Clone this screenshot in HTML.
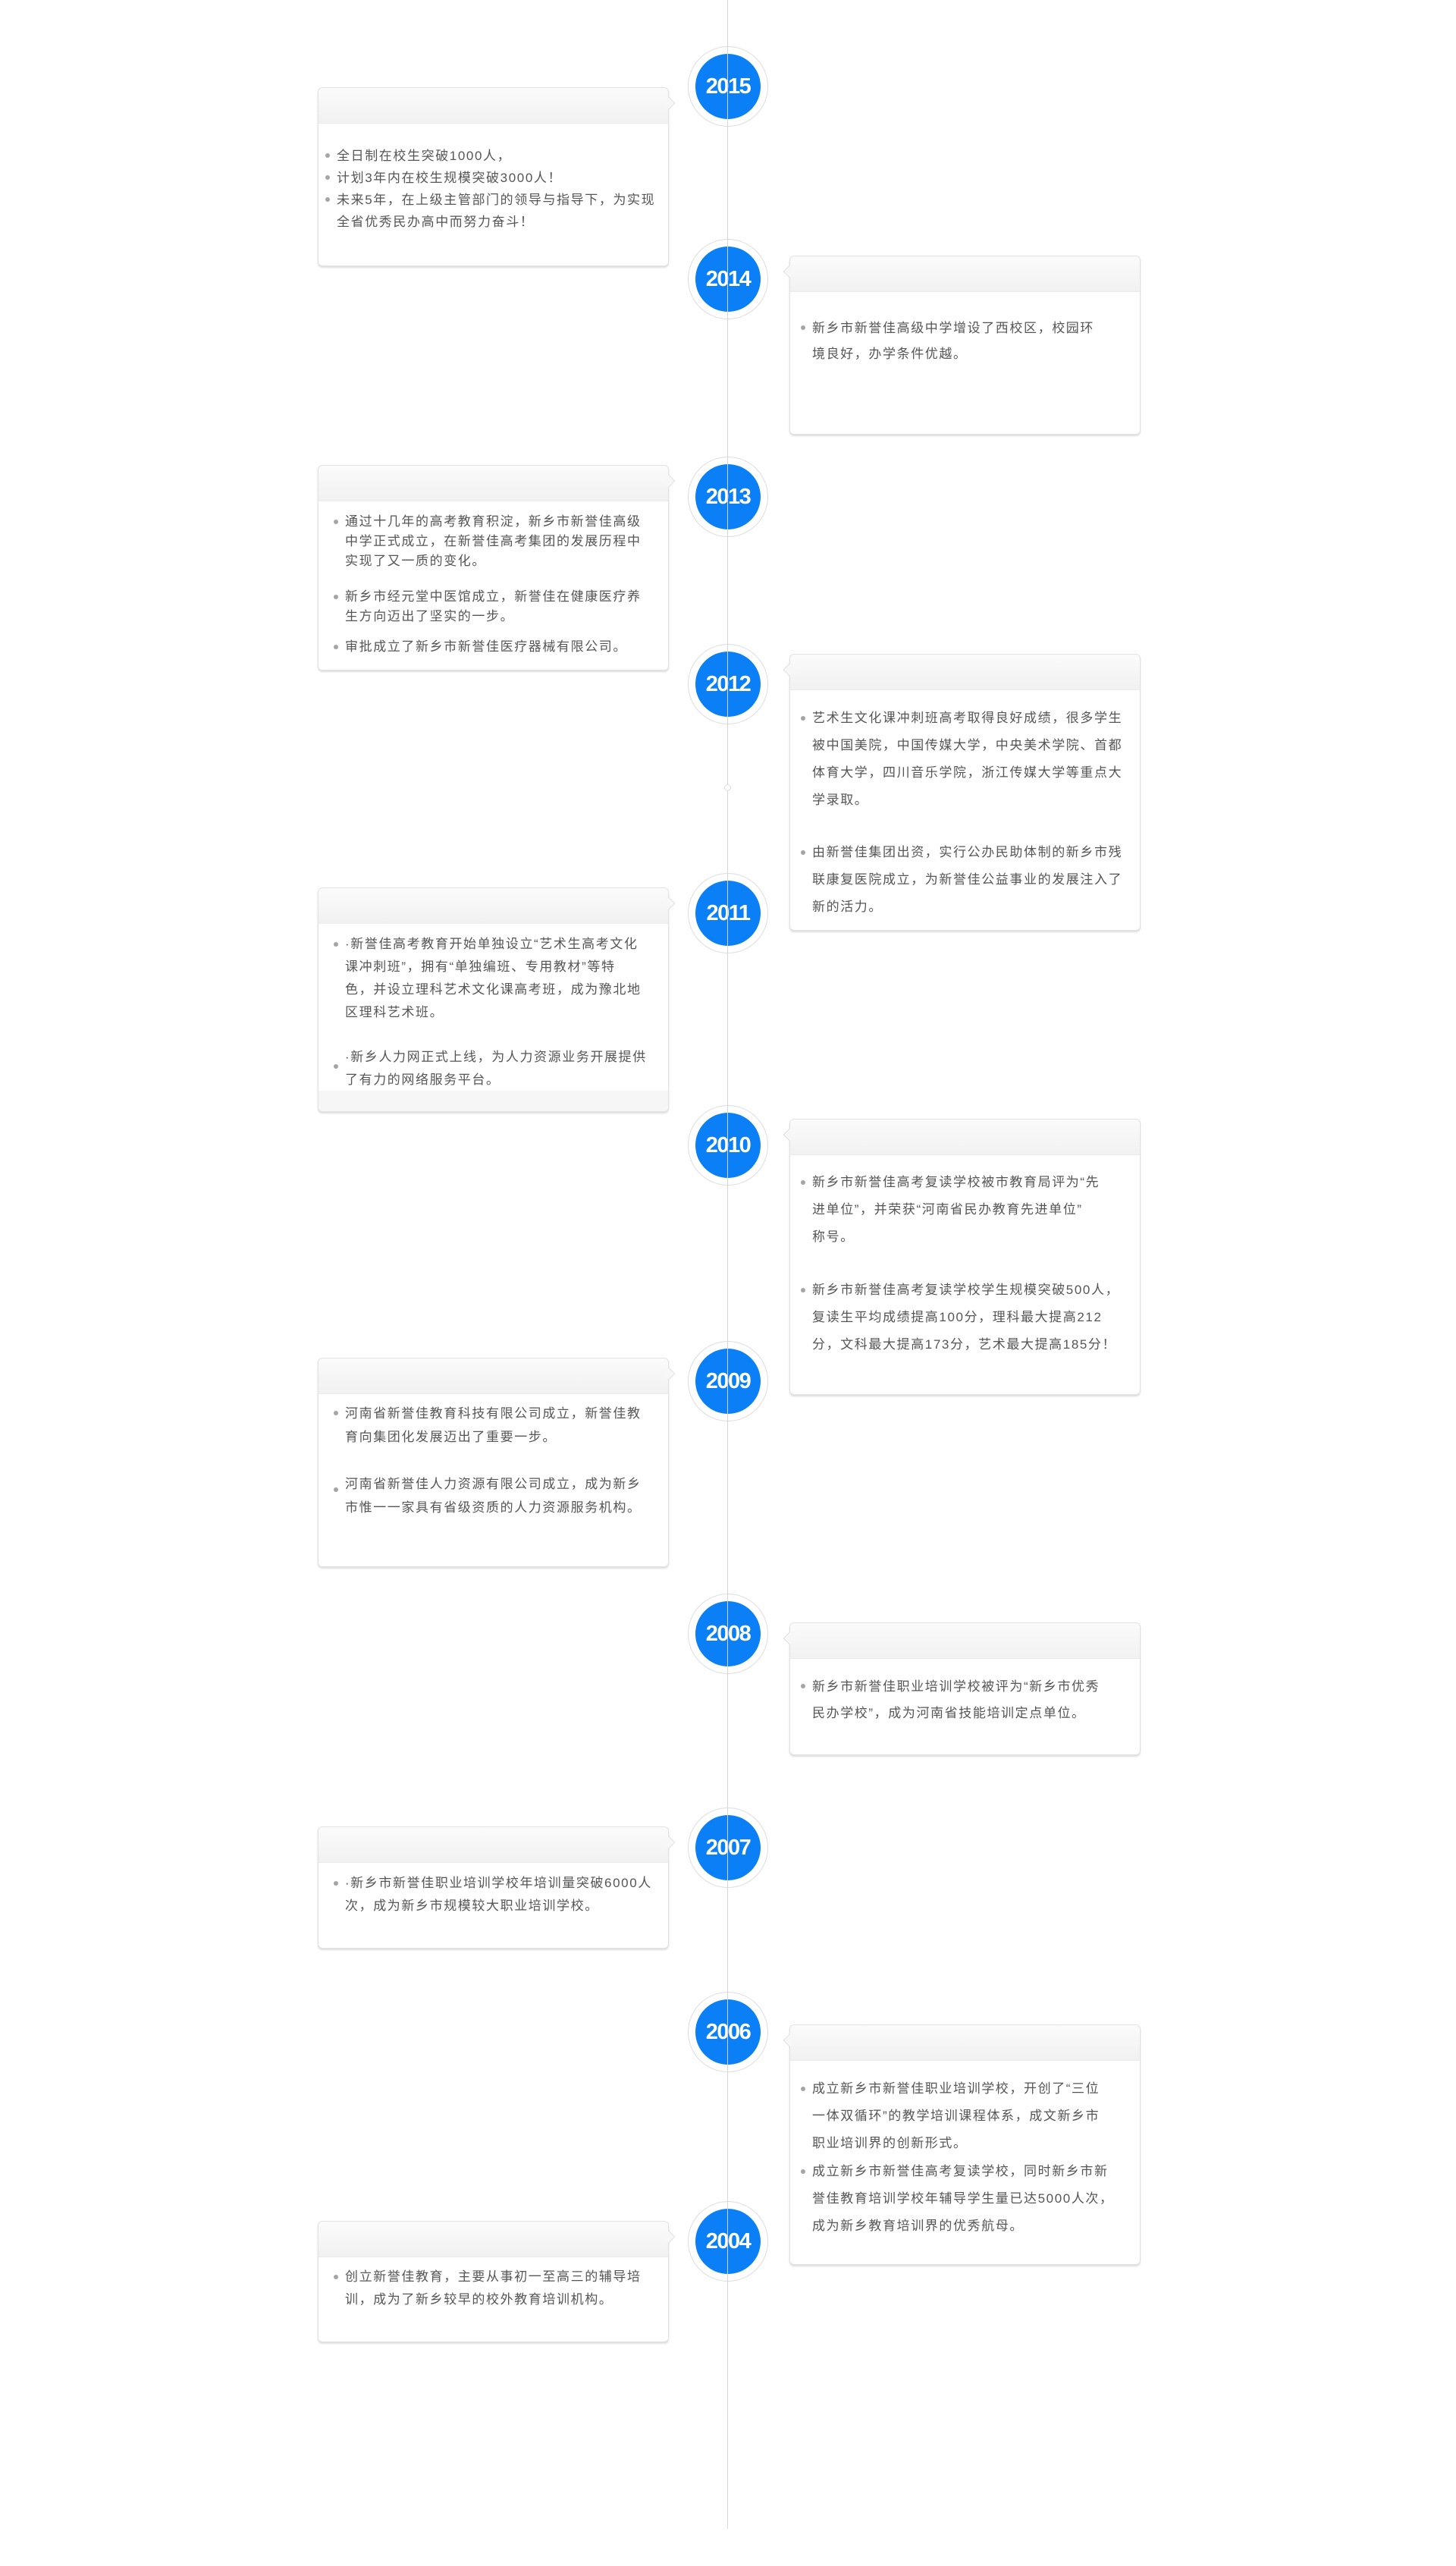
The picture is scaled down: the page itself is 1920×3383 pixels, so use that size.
<!DOCTYPE html>
<html><head><meta charset="utf-8">
<style>
*{margin:0;padding:0;box-sizing:border-box}
body{width:1920px;height:3383px;background:#fff;position:relative;overflow:hidden;font-family:"Liberation Sans","Noto Sans CJK SC",sans-serif}
.line{position:absolute;left:959px;top:0;width:1px;height:3334px;background:#d6d6d6;z-index:3}
.dot{position:absolute;left:955px;top:1034px;width:9px;height:9px;border:1px solid #ddd;border-radius:50%;background:#fff;z-index:4}
.yr{position:absolute;left:907px;width:106px;height:106px;margin-top:-53px;border-radius:50%;background:#fff;border:1px solid #ddd;z-index:2}
.yr span{position:absolute;left:9px;top:9px;width:86px;height:86px;border-radius:50%;background:#0a7ff6;color:#fff;font-weight:bold;font-size:29px;line-height:86px;text-align:center;letter-spacing:-1.5px}
.box{position:absolute;width:463px;border:1px solid #e2e2e2;border-radius:6px;background:#fff;box-shadow:0 2px 2px #ddd}
.box .hd{position:absolute;left:0;top:0;right:0;height:47px;border-radius:6px 6px 0 0;background:linear-gradient(#fbfbfb,#f1f1f1);border-bottom:1px solid #ececec}
.L{left:419px}.R{left:1041px}
.L .ar{position:absolute;right:-7px;top:14px;width:12px;height:12px;background:#f7f7f7;border-top:1px solid #e2e2e2;border-right:1px solid #e2e2e2;transform:rotate(45deg)}
.R .ar{position:absolute;left:-7px;top:14px;width:12px;height:12px;background:#f7f7f7;border-bottom:1px solid #e2e2e2;border-left:1px solid #e2e2e2;transform:rotate(45deg)}
.ft{position:absolute;left:0;right:0;bottom:0;height:27px;background:#f6f6f6;border-radius:0 0 6px 6px}
.t{position:absolute;color:#555;font-size:17px;letter-spacing:1.6px;white-space:nowrap}
.t.l{left:455px}.t.r{left:1071px}
.t::before{content:"";position:absolute;left:-15px;width:6px;height:6px;border-radius:50%;background:#a5a5a5;top:var(--b)}
</style></head><body>
<div class="line"></div>
<div class="dot"></div>

<div class="yr" style="top:114px"><span>2015</span></div>
<div class="yr" style="top:368px"><span>2014</span></div>
<div class="yr" style="top:655px"><span>2013</span></div>
<div class="yr" style="top:902px"><span>2012</span></div>
<div class="yr" style="top:1204px"><span>2011</span></div>
<div class="yr" style="top:1510px"><span>2010</span></div>
<div class="yr" style="top:1821px"><span>2009</span></div>
<div class="yr" style="top:2154px"><span>2008</span></div>
<div class="yr" style="top:2436px"><span>2007</span></div>
<div class="yr" style="top:2679px"><span>2006</span></div>
<div class="yr" style="top:2955px"><span>2004</span></div>

<div class="box L" style="top:115px;height:236px"><div class="hd"></div><div class="ar"></div></div>
<div class="box R" style="top:337px;height:236px"><div class="hd"></div><div class="ar"></div></div>
<div class="box L" style="top:613px;height:271px"><div class="hd"></div><div class="ar"></div></div>
<div class="box R" style="top:862px;height:365px"><div class="hd"></div><div class="ar"></div></div>
<div class="box L" style="top:1170px;height:296px"><div class="hd"></div><div class="ar"></div><div class="ft"></div></div>
<div class="box R" style="top:1475px;height:364px"><div class="hd"></div><div class="ar"></div></div>
<div class="box L" style="top:1790px;height:276px"><div class="hd"></div><div class="ar"></div></div>
<div class="box R" style="top:2139px;height:175px"><div class="hd"></div><div class="ar"></div></div>
<div class="box L" style="top:2408px;height:161px"><div class="hd"></div><div class="ar"></div></div>
<div class="box R" style="top:2669px;height:317px"><div class="hd"></div><div class="ar"></div></div>
<div class="box L" style="top:2928px;height:160px"><div class="hd"></div><div class="ar"></div></div>

<div class="t l" style="left:444px;top:191px;line-height:29px;--b:11px">全日制在校生突破1000人，</div>
<div class="t l" style="left:444px;top:220px;line-height:29px;--b:11px">计划3年内在校生规模突破3000人！</div>
<div class="t l" style="left:444px;top:249px;line-height:29px;--b:11px">未来5年，在上级主管部门的领导与指导下，为实现<br>全省优秀民办高中而努力奋斗！</div>
<div class="t r" style="top:416px;line-height:34px;--b:13px">新乡市新誉佳高级中学增设了西校区，校园环<br>境良好，办学条件优越。</div>
<div class="t l" style="top:675px;line-height:26px;--b:10px">通过十几年的高考教育积淀，新乡市新誉佳高级<br>中学正式成立，在新誉佳高考集团的发展历程中<br>实现了又一质的变化。</div>
<div class="t l" style="top:774px;line-height:26px;--b:10px">新乡市经元堂中医馆成立，新誉佳在健康医疗养<br>生方向迈出了坚实的一步。</div>
<div class="t l" style="top:840px;line-height:26px;--b:10px">审批成立了新乡市新誉佳医疗器械有限公司。</div>
<div class="t r" style="top:929px;line-height:36px;--b:15px">艺术生文化课冲刺班高考取得良好成绩，很多学生<br>被中国美院，中国传媒大学，中央美术学院、首都<br>体育大学，四川音乐学院，浙江传媒大学等重点大<br>学录取。</div>
<div class="t r" style="top:1106px;line-height:36px;--b:15px">由新誉佳集团出资，实行公办民助体制的新乡市残<br>联康复医院成立，为新誉佳公益事业的发展注入了<br>新的活力。</div>
<div class="t l" style="top:1230px;line-height:30px;--b:12px">·新誉佳高考教育开始单独设立“艺术生高考文化<br>课冲刺班”，拥有“单独编班、专用教材”等特<br>色，并设立理科艺术文化课高考班，成为豫北地<br>区理科艺术班。</div>
<div class="t l" style="top:1379px;line-height:30px;--b:24px">·新乡人力网正式上线，为人力资源业务开展提供<br>了有力的网络服务平台。</div>
<div class="t r" style="top:1541px;line-height:36px;--b:15px">新乡市新誉佳高考复读学校被市教育局评为“先<br>进单位”，并荣获“河南省民办教育先进单位”<br>称号。</div>
<div class="t r" style="top:1683px;line-height:36px;--b:15px">新乡市新誉佳高考复读学校学生规模突破500人，<br>复读生平均成绩提高100分，理科最大提高212<br>分，文科最大提高173分，艺术最大提高185分！</div>
<div class="t l" style="top:1848px;line-height:31px;--b:12px">河南省新誉佳教育科技有限公司成立，新誉佳教<br>育向集团化发展迈出了重要一步。</div>
<div class="t l" style="top:1941px;line-height:31px;--b:20px">河南省新誉佳人力资源有限公司成立，成为新乡<br>市惟一一家具有省级资质的人力资源服务机构。</div>
<div class="t r" style="top:2206px;line-height:35px;--b:14px">新乡市新誉佳职业培训学校被评为“新乡市优秀<br>民办学校”，成为河南省技能培训定点单位。</div>
<div class="t l" style="top:2468px;line-height:30px;--b:12px">·新乡市新誉佳职业培训学校年培训量突破6000人<br>次，成为新乡市规模较大职业培训学校。</div>
<div class="t r" style="top:2736px;line-height:36px;--b:15px">成立新乡市新誉佳职业培训学校，开创了“三位<br>一体双循环”的教学培训课程体系，成文新乡市<br>职业培训界的创新形式。</div>
<div class="t r" style="top:2845px;line-height:36px;--b:15px">成立新乡市新誉佳高考复读学校，同时新乡市新<br>誉佳教育培训学校年辅导学生量已达5000人次，<br>成为新乡教育培训界的优秀航母。</div>
<div class="t l" style="top:2987px;line-height:30px;--b:12px">创立新誉佳教育，主要从事初一至高三的辅导培<br>训，成为了新乡较早的校外教育培训机构。</div>
</body></html>
